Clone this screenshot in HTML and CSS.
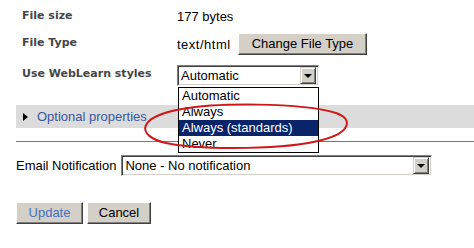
FILE: index.html
```html
<!DOCTYPE html>
<html>
<head>
    <meta charset="utf-8">
    <title>Edit file properties</title>
    <link rel="stylesheet" href="styles.css">
</head>
<body>
    <div class="page">
        <div class="props">
            <div class="row row-size">
                <span class="label">File size</span>
                <span class="value">177 bytes</span>
            </div>
            <div class="row row-type">
                <span class="label">File Type</span>
                <span class="value value-type">text/html</span>
                <span class="btn btn-change">Change File Type</span>
            </div>
            <div class="row row-styles">
                <span class="label">Use WebLearn styles</span>
                <div class="select select-styles">
                    <span class="select-text">Automatic</span>
                    <span class="select-arrow"><span class="tri-down"></span></span>
                    <ul class="dropdown">
                        <li>Automatic</li>
                        <li>Always</li>
                        <li class="active">Always (standards)</li>
                        <li>Never</li>
                    </ul>
                </div>
            </div>
        </div>

        <div class="toggle">
            <span class="tri-right"></span>
            <span class="toggle-text">Optional properties</span>
        </div>

        <div class="divider"></div>

        <div class="notify">
            <span class="notify-label">Email Notification</span>
            <div class="select select-notify">
                <span class="select-text">None - No notification</span>
                <span class="select-arrow"><span class="tri-down"></span></span>
            </div>
        </div>

        <div class="actions">
            <span class="btn btn-update">Update</span>
            <span class="btn btn-cancel">Cancel</span>
        </div>

        <svg class="mark" width="474" height="248" viewBox="0 0 474 248">
            <path d="M 182 109 C 215 103, 300 102, 336 113 C 354 119, 350 133, 322 140 C 290 149, 205 151, 166 143 C 136 136, 136 117, 182 109 Z"
                  fill="none" stroke="#d01818" stroke-width="2"/>
        </svg>
    </div>
</body>
</html>
```

FILE: styles.css
```css
* {
    box-sizing: border-box;
}

body {
    margin: 0;
    font-family: "Liberation Sans", Arial, sans-serif;
    font-size: 13px;
    color: #000;
    background: #fff;
}

.page {
    position: relative;
    width: 474px;
    height: 248px;
    padding: 5px 0 0 16px;
    overflow: hidden;
}

.props {
    padding-left: 6px;
}

.row {
    display: flex;
    align-items: center;
    height: 22px;
}

.row-size {
    margin-bottom: 6px;
}

.row-type {
    margin-bottom: 10px;
}

.row-styles {
    height: 21px;
}

.label {
    width: 155px;
    flex-shrink: 0;
    font-family: "DejaVu Sans", Verdana, sans-serif;
    font-weight: bold;
    font-size: 11px;
    color: #464646;
}

.row-size .label {
    padding-bottom: 2px;
}

.row-type .label {
    padding-bottom: 3px;
}

.row-styles .label {
    padding-bottom: 5px;
}

.value-type {
    width: 61px;
    letter-spacing: 0.5px;
}

/* classic raised button */
.btn {
    display: inline-flex;
    align-items: center;
    justify-content: center;
    height: 22px;
    background: #d4d0c8;
    border: 1px solid;
    border-color: #fff #404040 #404040 #fff;
    box-shadow: inset -1px -1px #808080;
    padding-bottom: 1px;
}

.btn-change {
    width: 129px;
}

/* classic sunken select */
.select {
    position: relative;
    display: flex;
    align-items: center;
    height: 21px;
    background: #fff;
    border: 1px solid;
    border-color: #808080 #fff #fff #808080;
    box-shadow: inset 1px 1px #404040, inset -1px -1px #d4d0c8;
    padding: 2px 2px 2px 3px;
}

.select-styles {
    width: 142px;
}

.select-notify {
    width: 311px;
}

.select-text {
    flex-grow: 1;
    padding-bottom: 1px;
}

.select-arrow {
    display: flex;
    align-items: center;
    justify-content: center;
    width: 16px;
    height: 17px;
    background: #d4d0c8;
    border: 1px solid;
    border-color: #d4d0c8 #404040 #404040 #d4d0c8;
    box-shadow: inset 1px 1px #fff, inset -1px -1px #808080;
}

.tri-down {
    width: 0;
    height: 0;
    border-left: 4px solid transparent;
    border-right: 4px solid transparent;
    border-top: 4px solid #000;
}

.dropdown {
    position: absolute;
    left: 0;
    top: 21px;
    width: 141px;
    margin: 0;
    padding: 0;
    list-style: none;
    background: #fff;
    border: 1px solid #000;
    z-index: 2;
}

.dropdown li {
    height: 16px;
    line-height: 16px;
    padding-left: 3px;
}

.dropdown li.active {
    background: #0a246a;
    color: #fff;
}

.toggle {
    display: flex;
    align-items: center;
    height: 23px;
    margin-top: 19px;
    padding-left: 7px;
    background: #dcdcdc;
}

.tri-right {
    width: 0;
    height: 0;
    border-top: 4px solid transparent;
    border-bottom: 4px solid transparent;
    border-left: 5px solid #000;
    margin-right: 9px;
}

.toggle-text {
    color: #3b55a0;
}

.divider {
    height: 1px;
    margin-top: 13px;
    background: #4d7fb6;
}

.notify {
    display: flex;
    align-items: center;
    margin-top: 13px;
}

.notify-label {
    margin-right: 5px;
}

.actions {
    display: flex;
    gap: 4px;
    margin-top: 26px;
}

.btn-update {
    width: 67px;
    color: #3f72bf;
}

.btn-cancel {
    width: 64px;
}

.mark {
    position: absolute;
    left: 0;
    top: 0;
    pointer-events: none;
    z-index: 3;
}
```
